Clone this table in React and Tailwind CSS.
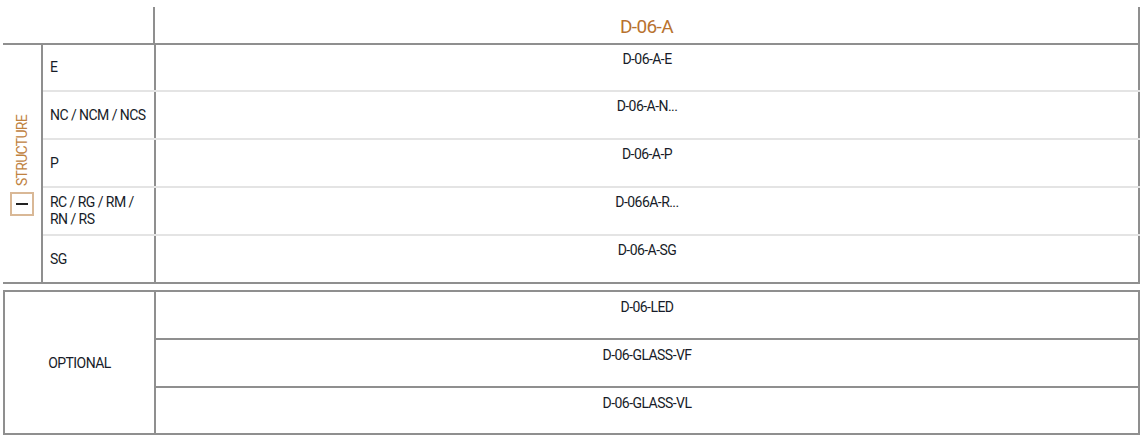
import React from 'react';

const structureRows = [
  { label: 'E', code: 'D-06-A-E', h: 'h-[45px]' },
  { label: 'NC / NCM / NCS', code: 'D-06-A-N...', h: 'h-[48px]' },
  { label: 'P', code: 'D-06-A-P', h: 'h-[48px]' },
  { label: 'RC / RG / RM / RN / RS', code: 'D-066A-R...', h: 'h-[48px]' },
  { label: 'SG', code: 'D-06-A-SG', h: 'h-[48px]' },
];

const optionalRows = [
  { code: 'D-06-LED', h: 'h-[46px]' },
  { code: 'D-06-GLASS-VF', h: 'h-[48px]' },
  { code: 'D-06-GLASS-VL', h: 'h-[47px]' },
];

const App = () => {
  return (
    <div className="w-[1148px] h-[442px] bg-white text-[#171c28] font-['Roboto',sans-serif] text-[14px] tracking-[-0.55px] pl-[3px] pt-[7px]">
      {/* main table */}
      <div className="w-[1137px]">
        <div className="flex h-[38px] border-b-2 border-[#8f8f8f]">
          <div className="w-[150px]" />
          <div className="flex-1 border-x-2 border-[#8f8f8f] flex items-end justify-center pb-[2px] text-[19px] tracking-[-0.6px] text-[#b8722f]">
            D-06-A
          </div>
        </div>

        <div className="flex border-b-2 border-[#8f8f8f]">
          <div className="w-[38px] flex flex-col items-center justify-center gap-[6px] pt-[4px]">
            <span className="[writing-mode:vertical-rl] rotate-180 text-[#c0823f] tracking-[-0.7px] leading-none">STRUCTURE</span>
            <div className="w-[24px] h-[24px] border-2 border-[#d9b896] flex items-center justify-center">
              <div className="w-[12px] h-[2px] bg-[#222]" />
            </div>
          </div>
          <div className="flex-1 border-l-2 border-[#8f8f8f]">
            {structureRows.map((r, i) => (
              <div key={r.code} className={`flex ${r.h} ${i > 0 ? 'border-t-2 border-[#e4e4e4]' : ''}`}>
                <div className="w-[111px] flex items-center pl-[7px] pr-[4px] leading-[17px]">{r.label}</div>
                <div className="flex-1 border-x-2 border-[#8f8f8f] flex justify-center pt-[4px]">{r.code}</div>
              </div>
            ))}
          </div>
        </div>
      </div>

      {/* optional table */}
      <div className="w-[1137px] mt-[6px] border-2 border-[#8f8f8f] flex">
        <div className="w-[149px] flex items-center justify-center pt-[2px]">OPTIONAL</div>
        <div className="flex-1 border-l-2 border-[#8f8f8f]">
          {optionalRows.map((r, i) => (
            <div key={r.code} className={`${r.h} flex justify-center pt-[5px] ${i > 0 ? 'border-t-2 border-[#8f8f8f]' : ''}`}>
              {r.code}
            </div>
          ))}
        </div>
      </div>
    </div>
  );
};

export default App;
